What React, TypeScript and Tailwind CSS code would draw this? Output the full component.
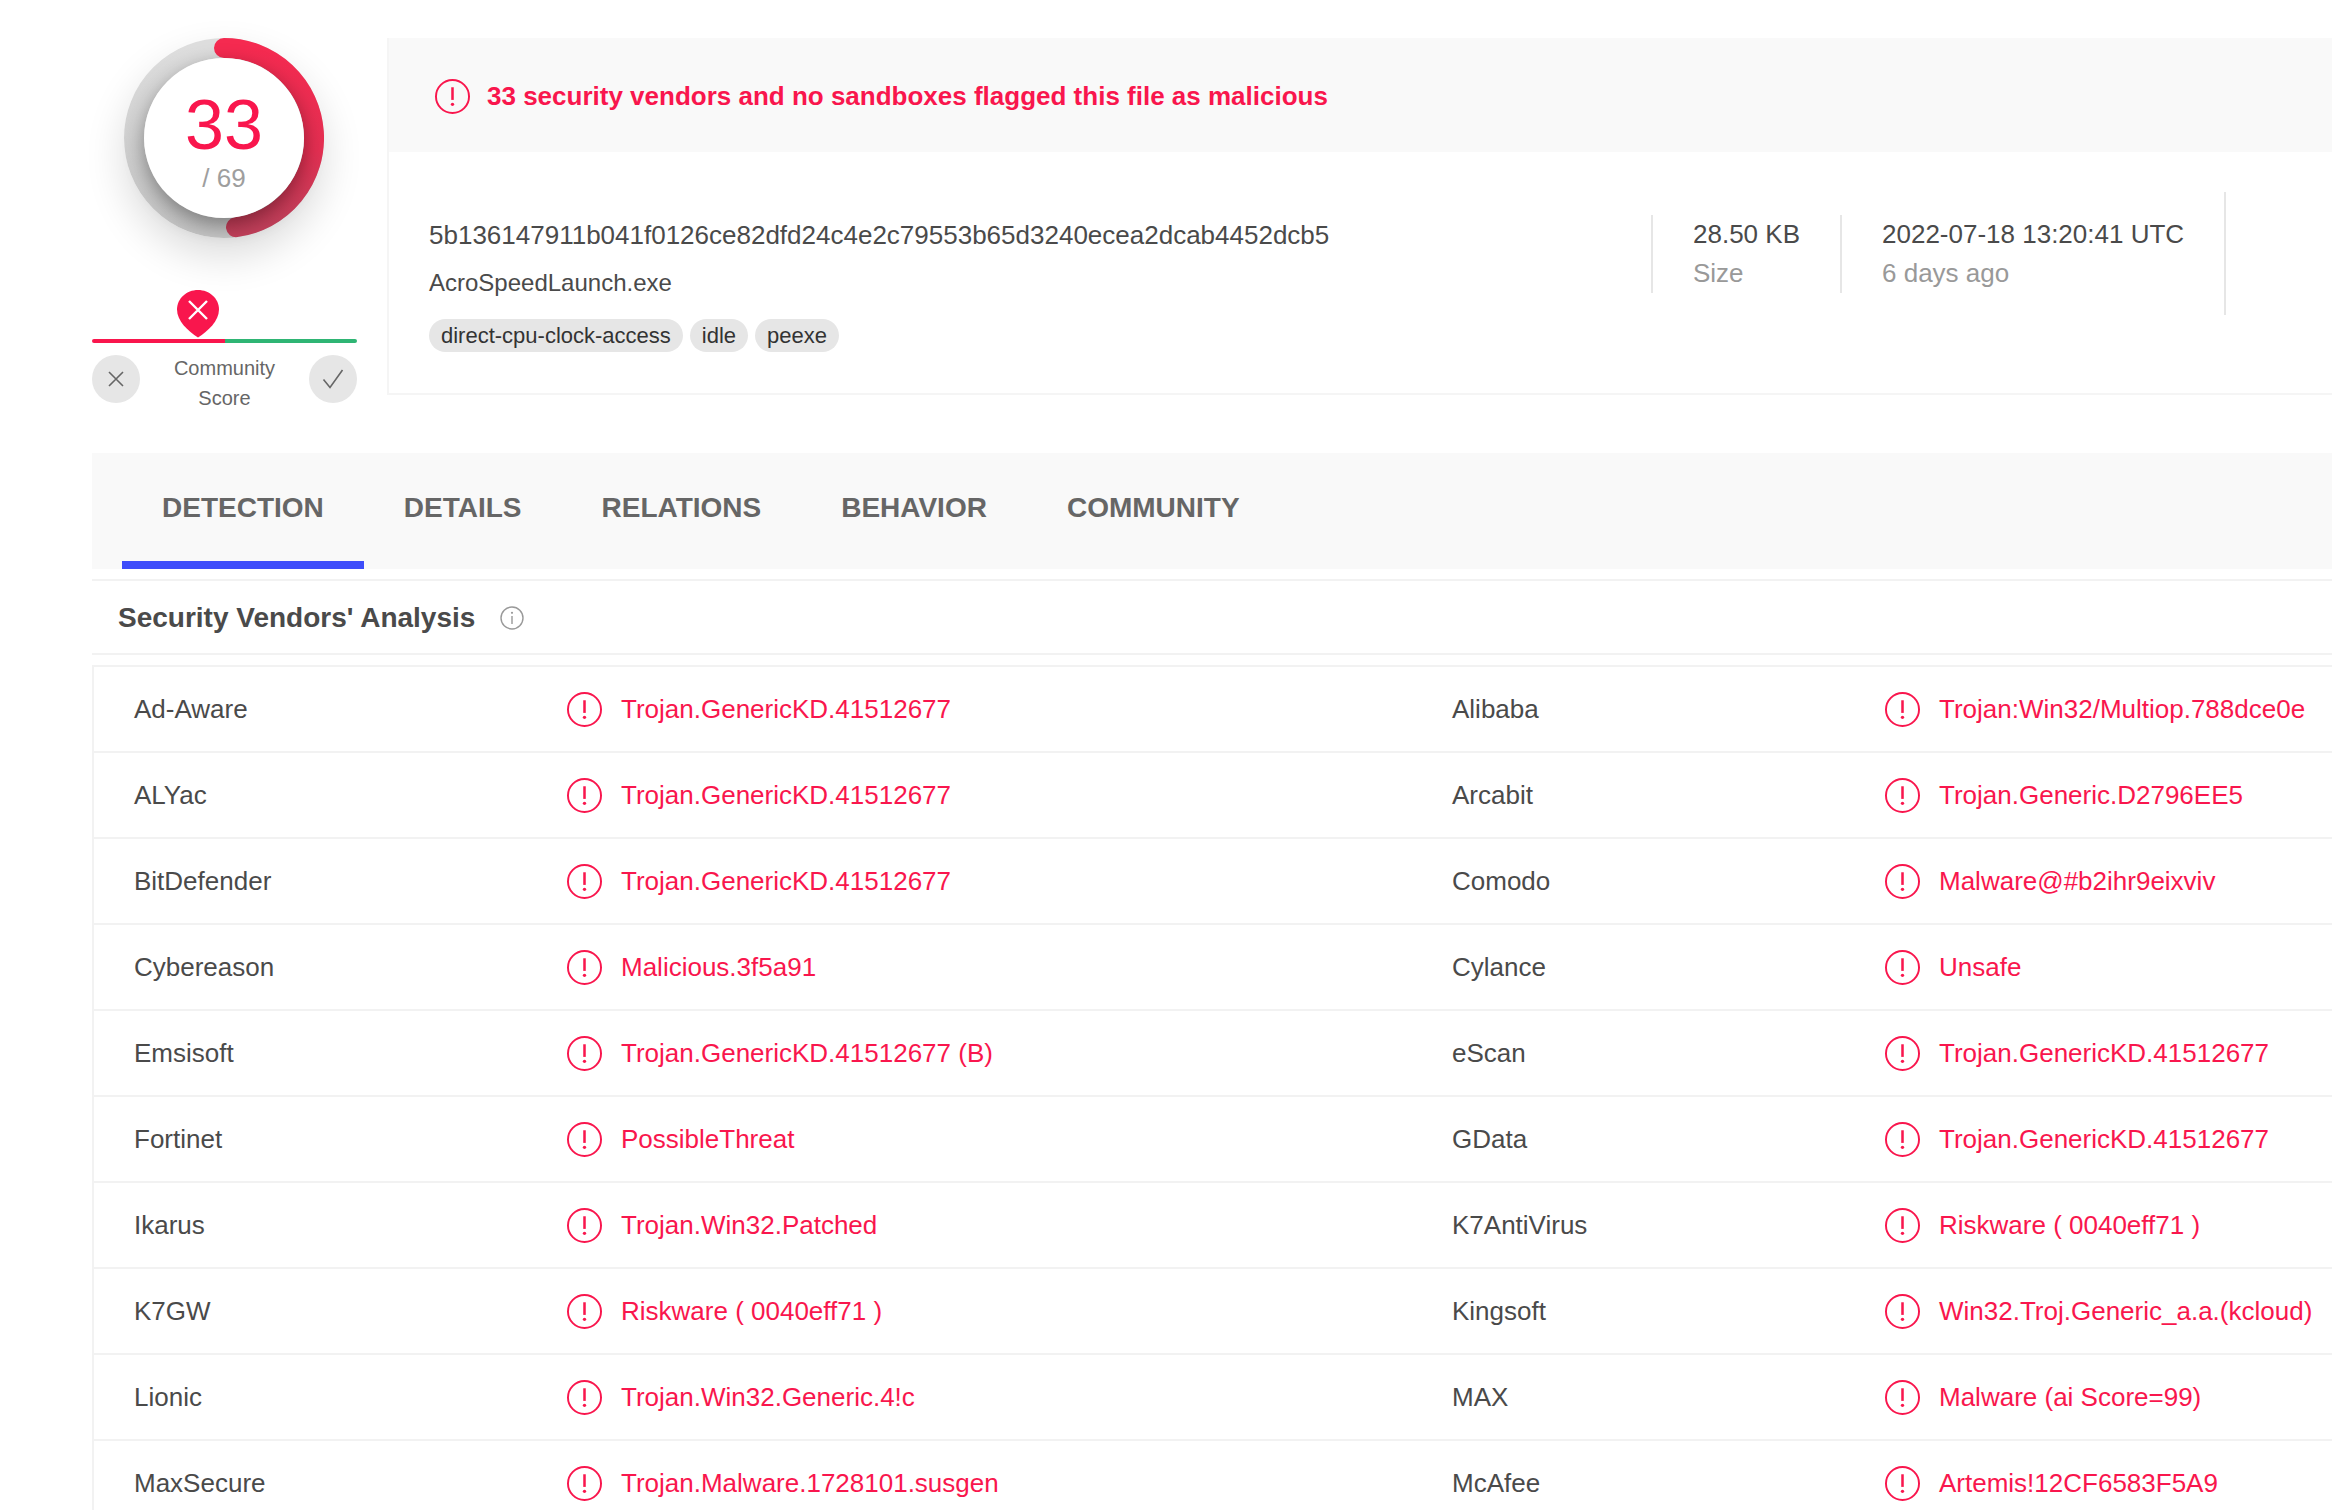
import React from "react";

const rows = [
  ["Ad-Aware", "Trojan.GenericKD.41512677", "Alibaba", "Trojan:Win32/Multiop.788dce0e"],
  ["ALYac", "Trojan.GenericKD.41512677", "Arcabit", "Trojan.Generic.D2796EE5"],
  ["BitDefender", "Trojan.GenericKD.41512677", "Comodo", "Malware@#b2ihr9eixviv"],
  ["Cybereason", "Malicious.3f5a91", "Cylance", "Unsafe"],
  ["Emsisoft", "Trojan.GenericKD.41512677 (B)", "eScan", "Trojan.GenericKD.41512677"],
  ["Fortinet", "PossibleThreat", "GData", "Trojan.GenericKD.41512677"],
  ["Ikarus", "Trojan.Win32.Patched", "K7AntiVirus", "Riskware ( 0040eff71 )"],
  ["K7GW", "Riskware ( 0040eff71 )", "Kingsoft", "Win32.Troj.Generic_a.a.(kcloud)"],
  ["Lionic", "Trojan.Win32.Generic.4!c", "MAX", "Malware (ai Score=99)"],
  ["MaxSecure", "Trojan.Malware.1728101.susgen", "McAfee", "Artemis!12CF6583F5A9"],
];

function AlertIcon({ size = 35 }: { size?: number }) {
  return (
    <svg width={size} height={size} viewBox="0 0 36 36" fill="none" className="shrink-0">
      <circle cx="18" cy="18" r="17" stroke="#f9164d" strokeWidth="2" />
      <path d="M18 8.5v13" stroke="#f9164d" strokeWidth="2.6" />
      <circle cx="18" cy="26" r="1.7" fill="#f9164d" />
    </svg>
  );
}

function Donut() {
  return (
    <div className="relative w-[200px] h-[200px] -ml-px rounded-full shadow-[0_18px_40px_rgba(0,0,0,0.14)]">
      <svg width="200" height="200" viewBox="0 0 200 200" className="absolute inset-0">
        <defs>
          <linearGradient id="ring" x1="0" y1="0" x2="0" y2="1">
            <stop offset="0" stopColor="#dddddd" />
            <stop offset="1" stopColor="#c4c4c4" />
          </linearGradient>
          <linearGradient id="arc" x1="0.2" y1="0" x2="0.3" y2="1">
            <stop offset="0" stopColor="#f52a50" />
            <stop offset="0.65" stopColor="#e52f52" />
            <stop offset="1" stopColor="#c23f5a" />
          </linearGradient>
        </defs>
        <circle cx="100" cy="100" r="90" fill="none" stroke="url(#ring)" strokeWidth="20" />
        <path
          d="M100 10A90 90 0 0 1 112 189.2"
          fill="none"
          stroke="url(#arc)"
          strokeWidth="20"
          strokeLinecap="round"
        />
      </svg>
      <div className="absolute left-[20px] top-[20px] w-[160px] h-[160px] rounded-full bg-white shadow-[0_7px_20px_rgba(0,0,0,0.38)] flex flex-col items-center">
        <div className="mt-[32px] text-[70px] leading-[70px] text-[#f9164d]">33</div>
        <div className="mt-[3px] text-[26px] leading-[30px] text-[#9e9e9e]">/ 69</div>
      </div>
    </div>
  );
}

function CommunityScore() {
  return (
    <div className="relative w-[265px] mt-[52px] h-[119px]">
      <svg width="42" height="48" viewBox="0 0 42 48" className="absolute left-[85px] top-0">
        <path d="M21 0C32.6 0 42 8.6 42 19.5 42 31 31 41 21 47.5 11 41 0 31 0 19.5 0 8.6 9.4 0 21 0Z" fill="#f9164d" />
        <path d="M12 11L30 29M30 11L12 29" stroke="#fff" strokeWidth="2.4" />
      </svg>
      <div className="absolute left-0 top-[49px] w-full h-[4px] rounded-full overflow-hidden flex">
        <div className="w-1/2 bg-[#f9164d]" />
        <div className="w-1/2 bg-[#2fb574]" />
      </div>
      <div className="absolute left-0 top-[65px] w-full flex justify-between items-start">
        <div className="w-[48px] h-[48px] rounded-full bg-[#e6e6e6] flex items-center justify-center">
          <svg width="18" height="18" viewBox="0 0 18 18" fill="none">
            <path d="M2 2L16 16M16 2L2 16" stroke="#666" strokeWidth="1.6" />
          </svg>
        </div>
        <div className="text-center text-[20px] leading-[30px] text-[#666] -mt-[2px]">
          Community
          <br />
          Score
        </div>
        <div className="w-[48px] h-[48px] rounded-full bg-[#e6e6e6] flex items-center justify-center">
          <svg width="22" height="20" viewBox="0 0 22 20" fill="none">
            <path d="M1.5 10.5L8 18.5L20.5 1" stroke="#666" strokeWidth="1.6" />
          </svg>
        </div>
      </div>
    </div>
  );
}

function Header() {
  return (
    <div className="flex h-[409px]">
      <div className="w-[265px] shrink-0 flex flex-col items-center pt-[38px]">
        <Donut />
        <CommunityScore />
      </div>
      <div className="ml-[30px] flex-1 mt-[38px] h-[357px] border-l-2 border-b-2 border-[#f5f5f5]">
        <div className="h-[114px] bg-[#f9f9f9] flex items-center pl-[46px] pt-[2px] gap-[17px]">
          <AlertIcon />
          <span className="text-[26px] font-bold text-[#f9164d]">
            33 security vendors and no sandboxes flagged this file as malicious
          </span>
        </div>
        <div className="flex items-start h-[241px]">
          <div className="w-[1262px] shrink-0 pl-[40px] pt-[67px]">
            <div className="text-[26px] leading-[32px] text-[#4a4a4a]">
              5b136147911b041f0126ce82dfd24c4e2c79553b65d3240ecea2dcab4452dcb5
            </div>
            <div className="mt-[16px] text-[24px] leading-[32px] text-[#4a4a4a]">AcroSpeedLaunch.exe</div>
            <div className="mt-[20px] flex gap-[7px]">
              {["direct-cpu-clock-access", "idle", "peexe"].map((tag) => (
                <span key={tag} className="h-[33px] px-[12px] rounded-full bg-[#e6e6e6] text-[22px] leading-[33px] text-[#333]">
                  {tag}
                </span>
              ))}
            </div>
          </div>
          <div className="flex mt-[63px]">
            <div className="h-[78px] border-l-2 border-[#e6e6e6] pl-[40px] w-[189px] text-[26px]">
              <div className="leading-[39px] text-[#4a4a4a]">28.50 KB</div>
              <div className="leading-[38px] text-[#999]">Size</div>
            </div>
            <div className="h-[78px] border-l-2 border-[#e6e6e6] pl-[40px] w-[384px] text-[26px]">
              <div className="leading-[39px] text-[#4a4a4a]">2022-07-18 13:20:41 UTC</div>
              <div className="leading-[38px] text-[#999]">6 days ago</div>
            </div>
            <div className="-mt-[23px] h-[123px] border-l-2 border-[#e6e6e6]" />
          </div>
        </div>
      </div>
    </div>
  );
}

function Tabs() {
  return (
    <div className="mt-[44px] h-[116px] bg-[#f9f9f9] flex pl-[30px]">
      {["DETECTION", "DETAILS", "RELATIONS", "BEHAVIOR", "COMMUNITY"].map((tab, i) => (
        <div
          key={tab}
          className={
            "px-[40px] h-[116px] pt-[37px] text-[28px] leading-[36px] font-bold text-[#666] border-b-[8px] " +
            (i === 0 ? "border-[#3e4dfa]" : "border-transparent")
          }
        >
          {tab}
        </div>
      ))}
    </div>
  );
}

export default function App() {
  return (
    <div className="w-[2332px] h-[1510px] overflow-hidden bg-white font-['Liberation_Sans',Arial,sans-serif] pl-[92px]">
      <div className="w-[2240px]">
        <Header />
        <Tabs />
        <div className="mt-[10px] h-[76px] border-t-2 border-b-2 border-[#f2f2f2] flex items-center pl-[26px] pt-[1px]">
          <span className="text-[28px] font-bold text-[#4a4a4a]">Security Vendors' Analysis</span>
          <svg width="24" height="24" viewBox="0 0 24 24" fill="none" className="ml-[25px]">
            <circle cx="12" cy="12" r="11" stroke="#999" strokeWidth="1.4" />
            <path d="M12 10v8" stroke="#999" strokeWidth="1.4" />
            <circle cx="12" cy="6.8" r="1.1" fill="#999" />
          </svg>
        </div>
        <div className="mt-[10px] w-[2700px] border-t-2 border-l-2 border-[#f2f2f2]">
          {rows.map((r) => (
            <div key={r[0]} className="h-[86px] border-b-2 border-[#f2f2f2] flex items-center text-[26px]">
              <div className="w-[473px] pl-[40px] text-[#4a4a4a]">{r[0]}</div>
              <div className="w-[885px] flex items-center gap-[19px] text-[#f9164d]">
                <AlertIcon />
                {r[1]}
              </div>
              <div className="w-[433px] text-[#4a4a4a]">{r[2]}</div>
              <div className="flex items-center gap-[19px] text-[#f9164d]">
                <AlertIcon />
                {r[3]}
              </div>
            </div>
          ))}
        </div>
      </div>
    </div>
  );
}
